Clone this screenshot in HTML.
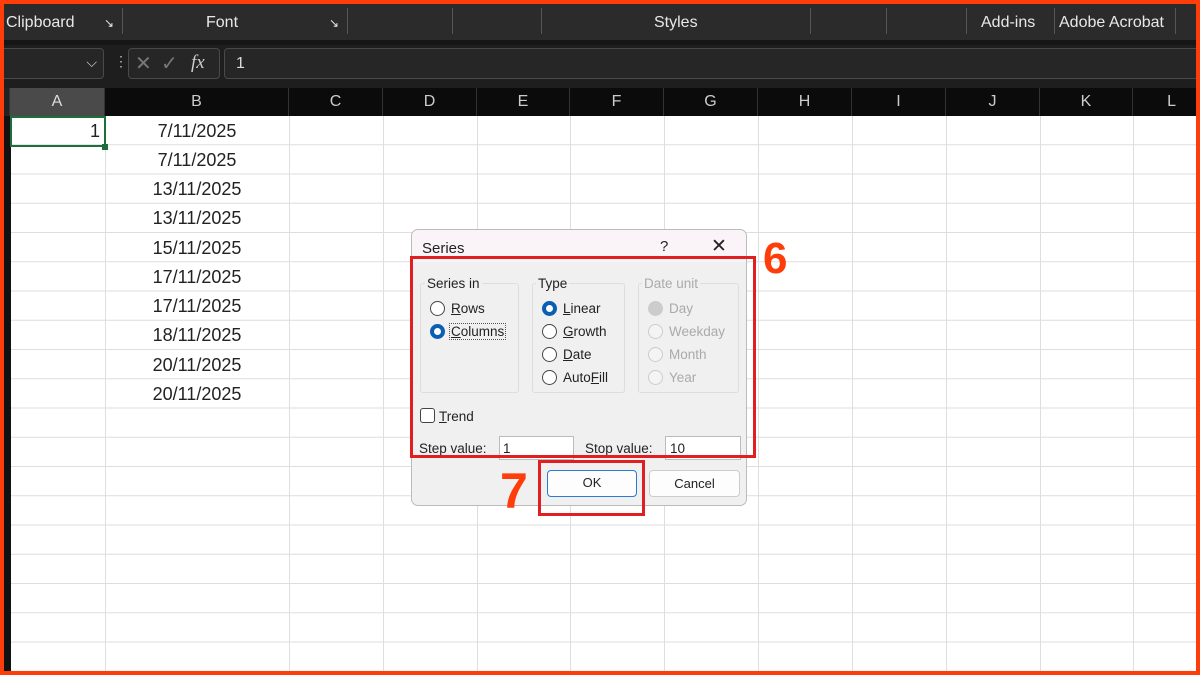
<!DOCTYPE html>
<html><head><style>
*{margin:0;padding:0;box-sizing:border-box}
body{width:1200px;height:675px;overflow:hidden;background:#ff3d0a;font-family:"Liberation Sans",sans-serif;position:relative}
.a{position:absolute}
#app{left:4px;top:4px;width:1192px;height:667px;background:#fff;overflow:hidden}
.rib{left:0;top:0;width:1192px;height:36px;background:#2b2b2b;color:#e8e8e8;font-size:16px}
.rib span{position:absolute;top:10px}
.sep{position:absolute;top:4px;width:1px;height:26px;background:#555}
.fb{left:0;top:36px;width:1192px;height:52px;background:#1e1e1e;border-top:5px solid #161616}
.box{position:absolute;border:1px solid #4a4a4a;border-radius:4px;background:#262626}
.ch{left:0;top:84px;width:1192px;height:28px;background:#0b0b0b;color:#ccc;font-size:16px}
.ch div{position:absolute;top:0;height:28px;line-height:28px;text-align:center;border-right:1px solid #333}
.grid{left:0;top:112px;width:1192px;height:560px;background-image:linear-gradient(#dedede 1px,transparent 1px);background-size:100% 29.25px;background-position:0 28.25px}
.vl{position:absolute;top:112px;width:1px;height:560px;background:#dedede}
.cell{position:absolute;font-size:18px;color:#222;text-align:center;width:184px;left:101px}
.dlg{left:411px;top:229px;width:336px;height:277px;background:#f0f0f0;border:1px solid #bbb;border-radius:7px;font-size:13px;color:#222;overflow:hidden}
.ttl{left:0;top:0;width:100%;height:32px;background:#faf3f7}
.grp{position:absolute;border:1px solid #ddd;border-radius:3px}
.rad{position:absolute;width:15px;height:15px;border:1.5px solid #444;border-radius:50%;background:#fff}
.rad.on{border:4px solid #0a5fb4}
.rad.dis{border-color:#ccc;background:#f4f4f4}
.lbl{position:absolute;font-size:13.5px}
.dis2{color:#aaa}
.red{position:absolute;border:3px solid #e02020}
</style></head><body>
<div id="app" class="a">
<div class="a rib">
<span style="left:2px">Clipboard</span><span style="left:100px;font-size:12px;top:12px">↘</span><div class="sep" style="left:118px"></div>
<span style="left:202px">Font</span><span style="left:325px;font-size:12px;top:12px">↘</span><div class="sep" style="left:343px"></div>
<div class="sep" style="left:448px"></div><div class="sep" style="left:537px"></div>
<span style="left:650px">Styles</span><div class="sep" style="left:806px"></div><div class="sep" style="left:882px"></div><div class="sep" style="left:962px"></div>
<span style="left:977px">Add-ins</span><div class="sep" style="left:1050px"></div><span style="left:1055px">Adobe Acrobat</span><div class="sep" style="left:1171px"></div>
</div>
<div class="a fb">
<div class="box" style="left:-10px;top:3px;width:110px;height:31px"><span style="position:absolute;right:6px;top:5px;color:#ccc;font-size:14px">⌵</span></div>
<span style="position:absolute;left:110px;top:8px;color:#bbb;font-size:14px">⋮</span>
<div class="box" style="left:124px;top:3px;width:92px;height:31px;color:#777;font-size:20px"><span style="position:absolute;left:6px;top:2px">✕</span><span style="position:absolute;left:32px;top:2px">✓</span><span style="position:absolute;left:62px;top:3px;color:#ccc;font-family:'Liberation Serif';font-style:italic;font-size:19px">fx</span></div>
<div class="box" style="left:220px;top:3px;width:980px;height:31px;color:#ddd;font-size:16px"><span style="position:absolute;left:11px;top:6px">1</span></div>
</div>
<div class="a ch">
<div style="left:0;width:6px;background:#222"></div>
<div style="left:6px;width:95px;background:#4a4a4a;color:#ddd">A</div>
<div style="left:101px;width:184px">B</div><div style="left:285px;width:94px">C</div><div style="left:379px;width:94px">D</div><div style="left:473px;width:93px">E</div><div style="left:566px;width:94px">F</div><div style="left:660px;width:94px">G</div><div style="left:754px;width:94px">H</div><div style="left:848px;width:94px">I</div><div style="left:942px;width:94px">J</div><div style="left:1036px;width:93px">K</div><div style="left:1129px;width:94px;text-align:right;padding-right:50px">L</div>
</div>
<div class="a grid"></div>
<div class="a" style="left:0;top:112px;width:7px;height:560px;background:#111"></div>
<div class="vl" style="left:101px"></div><div class="vl" style="left:285px"></div><div class="vl" style="left:379px"></div><div class="vl" style="left:473px"></div><div class="vl" style="left:566px"></div><div class="vl" style="left:660px"></div><div class="vl" style="left:754px"></div><div class="vl" style="left:848px"></div><div class="vl" style="left:942px"></div><div class="vl" style="left:1036px"></div><div class="vl" style="left:1129px"></div>
<div class="a" style="left:6px;top:112px;width:96px;height:31px;border:2px solid #1e6e3c"></div>
<div class="a" style="left:98px;top:140px;width:6px;height:6px;background:#1e6e3c"></div>
<div class="cell" style="left:6px;width:90px;text-align:right;top:117px">1</div>
<div class="cell" style="top:117px">7/11/2025</div>
<div class="cell" style="top:146px">7/11/2025</div>
<div class="cell" style="top:175px">13/11/2025</div>
<div class="cell" style="top:204px">13/11/2025</div>
<div class="cell" style="top:234px">15/11/2025</div>
<div class="cell" style="top:263px">17/11/2025</div>
<div class="cell" style="top:292px">17/11/2025</div>
<div class="cell" style="top:321px">18/11/2025</div>
<div class="cell" style="top:351px">20/11/2025</div>
<div class="cell" style="top:380px">20/11/2025</div>
</div>

<div class="a dlg">
<div class="a ttl"></div>
<span class="lbl" style="left:10px;top:10px;font-size:15px">Series</span>
<span class="lbl" style="left:248px;top:8px;font-size:15px">?</span>
<span class="lbl" style="left:299px;top:5px;font-size:19px">✕</span>
<div class="grp" style="left:8px;top:53px;width:99px;height:110px"></div>
<span class="lbl" style="left:13px;top:46px;background:#f0f0f0;padding:0 2px">Series in</span>
<div class="rad" style="left:18px;top:71px"></div><span class="lbl" style="left:39px;top:71px"><u>R</u>ows</span>
<div class="rad on" style="left:18px;top:94px"></div><span class="lbl" style="left:37px;top:93px;border:1px dotted #555;padding:0 1px"><u>C</u>olumns</span>
<div class="grp" style="left:120px;top:53px;width:93px;height:110px"></div>
<span class="lbl" style="left:124px;top:46px;background:#f0f0f0;padding:0 2px">Type</span>
<div class="rad on" style="left:130px;top:71px"></div><span class="lbl" style="left:151px;top:71px"><u>L</u>inear</span>
<div class="rad" style="left:130px;top:94px"></div><span class="lbl" style="left:151px;top:94px"><u>G</u>rowth</span>
<div class="rad" style="left:130px;top:117px"></div><span class="lbl" style="left:151px;top:117px"><u>D</u>ate</span>
<div class="rad" style="left:130px;top:140px"></div><span class="lbl" style="left:151px;top:140px">Auto<u>F</u>ill</span>
<div class="grp" style="left:226px;top:53px;width:101px;height:110px"></div>
<span class="lbl dis2" style="left:230px;top:46px;background:#f0f0f0;padding:0 2px">Date unit</span>
<div class="rad dis" style="left:236px;top:71px;background:#ccc"></div><span class="lbl dis2" style="left:257px;top:71px">Day</span>
<div class="rad dis" style="left:236px;top:94px"></div><span class="lbl dis2" style="left:257px;top:94px">Weekday</span>
<div class="rad dis" style="left:236px;top:117px"></div><span class="lbl dis2" style="left:257px;top:117px">Month</span>
<div class="rad dis" style="left:236px;top:140px"></div><span class="lbl dis2" style="left:257px;top:140px">Year</span>
<div class="a" style="left:8px;top:178px;width:15px;height:15px;border:1.5px solid #444;border-radius:3px;background:#fff"></div>
<span class="lbl" style="left:27px;top:179px"><u>T</u>rend</span>
<span class="lbl" style="left:7px;top:211px">Step value:</span>
<div class="a" style="left:87px;top:206px;width:75px;height:24px;background:#fff;border:1px solid #bbb"></div><span class="lbl" style="left:91px;top:211px">1</span>
<span class="lbl" style="left:173px;top:211px">Stop value:</span>
<div class="a" style="left:253px;top:206px;width:76px;height:24px;background:#fff;border:1px solid #bbb"></div><span class="lbl" style="left:258px;top:211px">10</span>
<div class="a" style="left:135px;top:240px;width:90px;height:27px;background:#fdfdfd;border:1.5px solid #2a7ad6;border-radius:4px;text-align:center;line-height:24px">OK</div>
<div class="a" style="left:237px;top:240px;width:91px;height:27px;background:#fdfdfd;border:1px solid #ccc;border-radius:4px;text-align:center;line-height:25px">Cancel</div>
</div>
<div class="red" style="left:410px;top:256px;width:346px;height:202px"></div>
<div class="red" style="left:538px;top:460px;width:107px;height:56px"></div>
<div class="a" style="left:763px;top:234px;font-size:44px;font-weight:bold;color:#ff3d0a">6</div>
<div class="a" style="left:500px;top:462px;font-size:50px;font-weight:bold;color:#ff3d0a">7</div>
</body></html>
